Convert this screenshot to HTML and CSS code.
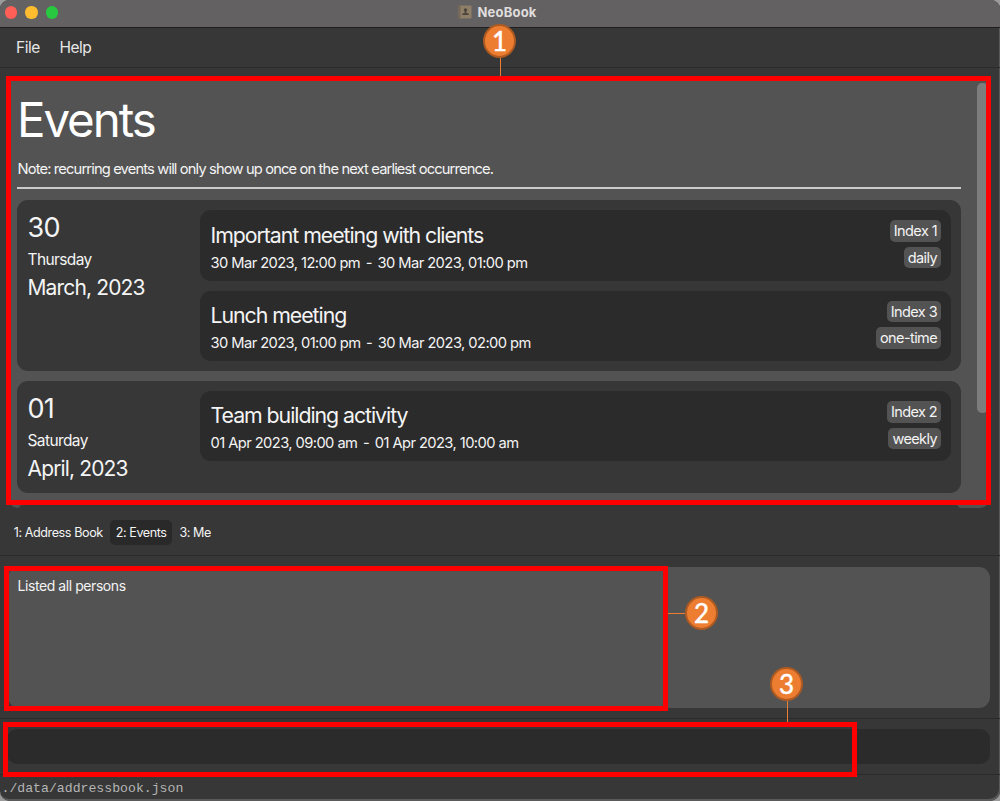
FILE: index.html
```html
<!DOCTYPE html>
<html lang="en">
<head>
<meta charset="utf-8">
<title>NeoBook</title>
<link rel="stylesheet" href="styles.css">
</head>
<body>
<div class="window">
  <header class="titlebar">
    <div class="lights"><i class="light red"></i><i class="light yellow"></i><i class="light green"></i></div>
    <div class="title">
      <svg class="title-icon" width="14" height="14" viewBox="0 0 14 14">
        <rect x=".5" y=".5" width="13" height="13" rx="1" fill="#8f7f68"/>
        <path d="M1.500 .5v13" stroke="#746858" stroke-width="2"/>
        <circle cx="7.500" cy="5" r="1.700" fill="#4d463e"/>
        <path d="M6.700 6h1.600v1.700l2.500 1V10H4.200V8.700l2.500-1z" fill="#4d463e"/>
      </svg>
      <span>NeoBook</span>
    </div>
  </header>
  <nav class="menubar"><span>File</span><span>Help</span></nav>
  <main class="content">
    <section class="events">
      <div class="list">
        <h1>Events</h1>
        <p class="note">Note: recurring events will only show up once on the next earliest occurrence.</p>
        <hr>
        <article class="day">
          <div class="date"><div class="num">30</div><div class="weekday">Thursday</div><div class="month">March, 2023</div></div>
          <div class="cards">
            <div class="card">
              <div class="info"><h2>Important meeting with clients</h2><p>30 Mar 2023, 12:00 pm<span class="dash">-</span>30 Mar 2023, 01:00 pm</p></div>
              <div class="tags"><span class="tag">Index 1</span><span class="tag">daily</span></div>
            </div>
            <div class="card">
              <div class="info"><h2>Lunch meeting</h2><p>30 Mar 2023, 01:00 pm<span class="dash">-</span>30 Mar 2023, 02:00 pm</p></div>
              <div class="tags"><span class="tag">Index 3</span><span class="tag">one-time</span></div>
            </div>
          </div>
        </article>
        <article class="day">
          <div class="date"><div class="num">01</div><div class="weekday">Saturday</div><div class="month">April, 2023</div></div>
          <div class="cards">
            <div class="card">
              <div class="info"><h2>Team building activity</h2><p>01 Apr 2023, 09:00 am<span class="dash">-</span>01 Apr 2023, 10:00 am</p></div>
              <div class="tags"><span class="tag">Index 2</span><span class="tag">weekly</span></div>
            </div>
          </div>
        </article>
        <article class="day"></article>
      </div>
      <div class="scrollbar"><div class="thumb"></div></div>
    </section>
    <div class="tabs"><span class="tab">1: Address Book</span><span class="tab active">2: Events</span><span class="tab">3: Me</span></div>
  </main>
  <section class="result-pane"><div class="result">Listed all persons</div></section>
  <section class="command-pane"><div class="command"></div></section>
  <footer class="statusbar">./data/addressbook.json</footer>
</div>

<div class="frame frame-1"></div>
<div class="frame frame-2"></div>
<div class="frame frame-3"></div>
<div class="lead lead-1"></div>
<div class="lead lead-2"></div>
<div class="lead lead-3"></div>
<div class="badge badge-1">1</div>
<div class="badge badge-2">2</div>
<div class="badge badge-3">3</div>
</body>
</html>
```
FILE: styles.css
```css
* { box-sizing: border-box; }
body {
  margin: 0;
  width: 1000px;
  height: 801px;
  overflow: hidden;
  position: relative;
  background: #9b9b9b;
  font-family: Inter, "Liberation Sans", sans-serif;
  color: #f4f4f4;
}
h1, h2, p { margin: 0; font-weight: 400; }

.window {
  width: 1000px;
  height: 801px;
  display: flex;
  flex-direction: column;
  background: #373737;
  border-radius: 9px 9px 10px 10px;
  overflow: hidden;
  box-shadow: inset -1px -2px 0 #5a5a5a;
}
.titlebar {
  height: 28px;
  flex: none;
  display: grid;
  grid-template-columns: 1fr auto 1fr;
  align-items: center;
  background: #646162;
  border-bottom: 1px solid #1f1f1f;
  padding: 0 5px 2px;
}
.lights { display: flex; gap: 8px; }
.light { width: 12.300px; height: 12.300px; border-radius: 50%; }
.red { background: #ff5f57; }
.yellow { background: #febc2e; }
.green { background: #28c840; }
.title {
  display: flex;
  align-items: center;
  gap: 5px;
  padding-right: 5px;
  font-size: 13px;
  font-weight: 700;
  letter-spacing: .2px;
  line-height: 16px;
  color: #dfdddd;
}
.title span { margin-top: -1px; }
.title-icon { margin-top: -1px; }
.menubar {
  height: 40px;
  flex: none;
  display: flex;
  align-items: center;
  gap: 19.500px;
  padding: 0 16px;
  border-bottom: 1px solid #2c2c2c;
  font-size: 15.500px;
  letter-spacing: -.45px;
  color: #e6e6e6;
}
.content {
  height: 488px;
  flex: none;
  padding: 10px 10px 0 8px;
  border-bottom: 1px solid #2c2c2c;
}
.events {
  height: 430px;
  display: flex;
  justify-content: space-between;
  background: #535353;
  border-radius: 10px;
  overflow: hidden;
}
.list { width: 953px; padding: 0 0 0 9px; }
h1 {
  height: 80px;
  padding-top: 13px;
  font-size: 47.500px;
  line-height: 58px;
  letter-spacing: -2.100px;
  color: #fff;
}
.note { height: 29px; font-size: 14.700px; line-height: 22px; letter-spacing: -.85px; padding-left: .5px; white-space: nowrap; }
hr { margin: 0 0 11.300px; border: 0; height: 2px; background: #ccc9cb; }
.day {
  display: flex;
  width: 944px;
  margin-bottom: 10px;
  padding: 10px;
  background: #373737;
  border-radius: 11px;
}
.date { width: 173px; flex: none; height: 92px; padding: .7px 0 0 .5px; }
.num { height: 37.500px; font-size: 27px; line-height: 34px; letter-spacing: -.8px; }
.weekday { height: 25px; font-size: 15.500px; line-height: 23px; letter-spacing: -.6px; }
.month { font-size: 21px; line-height: 30px; letter-spacing: -.85px; }
.cards { flex: 1; display: flex; flex-direction: column; gap: 10px; }
.card {
  height: 70.300px;
  display: flex;
  justify-content: space-between;
  padding: 10px;
  background: #2b2b2b;
  border-radius: 11px;
}
.info { white-space: nowrap; padding: .4px 0 0 .5px; }
h2 { font-size: 21.300px; line-height: 28px; letter-spacing: -1.040px; }
.info p { font-size: 14.700px; line-height: 28px; letter-spacing: -.57px; }
.dash { margin: 0 5.600px; }
.tags { display: flex; flex-direction: column; align-items: flex-end; gap: 5px; padding-top: .2px; }
.tag {
  height: 21.500px;
  padding: 0 4px;
  border-radius: 5px;
  background: #535353;
  font-size: 14.500px;
  line-height: 22px;
  letter-spacing: -.6px;
}
.scrollbar { width: 13.500px; padding-top: 5px; }
.thumb { width: 11px; height: 330px; border-radius: 5px; background: #7d7d7d; }
.tabs { display: flex; margin-top: 12px; gap: 1.500px; font-size: 12.600px; letter-spacing: -.42px; }
.tab { height: 25px; padding: 0 5.700px; border-radius: 5px; line-height: 25px; white-space: nowrap; }
.active { background: #292929; }
.result-pane { height: 163px; flex: none; padding: 10.500px 10px 10px 8px; border-bottom: 1px solid #2c2c2c; }
.result {
  height: 141.500px;
  padding: 8px 9.500px;
  border-radius: 11px;
  background: #535353;
  font-size: 14px;
  line-height: 22px;
  letter-spacing: -.43px;
}
.command-pane { height: 56px; flex: none; padding: 10px 10px 10px 7px; border-bottom: 1px solid #2c2c2c; }
.command { height: 35px; border-radius: 10px; background: #2b2b2b; }
.statusbar {
  padding: 6px 1.500px;
  font: 13.180px/16px "Liberation Mono", monospace;
  color: #b5b5b5;
}

/* callouts drawn over the window */
.frame, .lead, .badge { position: absolute; }
.frame { border: 5px solid #f00; }
.frame-1 { left: 6px; top: 76px; width: 985px; height: 429px; }
.frame-2 { left: 4px; top: 566px; width: 664px; height: 145px; }
.frame-3 { left: 3px; top: 722px; width: 854px; height: 55px; }
.lead { background: #ed7d31; }
.lead-1 { left: 500px; top: 56px; width: 1px; height: 20px; }
.lead-2 { left: 668px; top: 613px; width: 19px; height: 1px; }
.lead-3 { left: 787px; top: 699px; width: 1px; height: 23px; }
.badge {
  width: 33px;
  height: 34px;
  border: 2px solid #ae5a21;
  border-radius: 50%;
  background: #ed7d31;
  color: #fff;
  font: 26px/31px Lato, sans-serif;
  -webkit-text-stroke: .5px #fff;
  text-align: center;
}
.badge-1 { left: 483px; top: 24px; }
.badge-2 { left: 685px; top: 596px; }
.badge-3 { left: 770px; top: 667px; }
```
